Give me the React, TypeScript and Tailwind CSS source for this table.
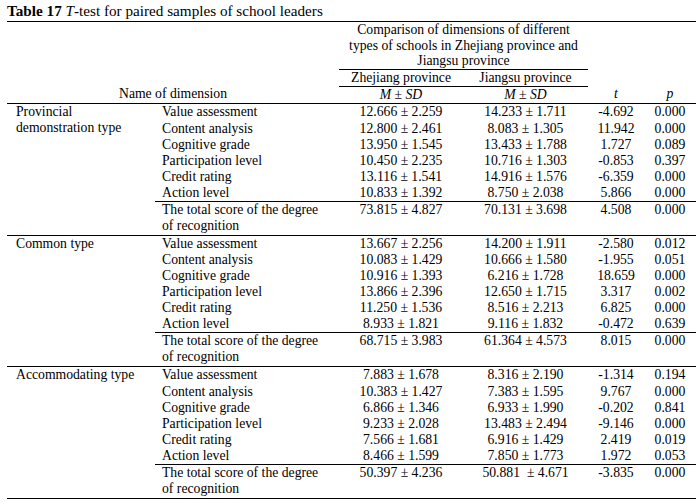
type Row = { dim: string; zj: string; js: string; t: string; p: string };
type Group = { name: React.ReactNode; rows: Row[]; total: Row };

const groups: Group[] = [
  {
    name: (
      <>
        Provincial
        <br />
        demonstration type
      </>
    ),
    rows: [
      { dim: "Value assessment", zj: "12.666 ± 2.259", js: "14.233 ± 1.711", t: "-4.692", p: "0.000" },
      { dim: "Content analysis", zj: "12.800 ± 2.461", js: "8.083 ± 1.305", t: "11.942", p: "0.000" },
      { dim: "Cognitive grade", zj: "13.950 ± 1.545", js: "13.433 ± 1.788", t: "1.727", p: "0.089" },
      { dim: "Participation level", zj: "10.450 ± 2.235", js: "10.716 ± 1.303", t: "-0.853", p: "0.397" },
      { dim: "Credit rating", zj: "13.116 ± 1.541", js: "14.916 ± 1.576", t: "-6.359", p: "0.000" },
      { dim: "Action level", zj: "10.833 ± 1.392", js: "8.750 ± 2.038", t: "5.866", p: "0.000" },
    ],
    total: { dim: "", zj: "73.815 ± 4.827", js: "70.131 ± 3.698", t: "4.508", p: "0.000" },
  },
  {
    name: "Common type",
    rows: [
      { dim: "Value assessment", zj: "13.667 ± 2.256", js: "14.200 ± 1.911", t: "-2.580", p: "0.012" },
      { dim: "Content analysis", zj: "10.083 ± 1.429", js: "10.666 ± 1.580", t: "-1.955", p: "0.051" },
      { dim: "Cognitive grade", zj: "10.916 ± 1.393", js: "6.216 ± 1.728", t: "18.659", p: "0.000" },
      { dim: "Participation level", zj: "13.866 ± 2.396", js: "12.650 ± 1.715", t: "3.317", p: "0.002" },
      { dim: "Credit rating", zj: "11.250 ± 1.536", js: "8.516 ± 2.213", t: "6.825", p: "0.000" },
      { dim: "Action level", zj: "8.933 ± 1.821", js: "9.116 ± 1.832", t: "-0.472", p: "0.639" },
    ],
    total: { dim: "", zj: "68.715 ± 3.983", js: "61.364 ± 4.573", t: "8.015", p: "0.000" },
  },
  {
    name: "Accommodating type",
    rows: [
      { dim: "Value assessment", zj: "7.883 ± 1.678", js: "8.316 ± 2.190", t: "-1.314", p: "0.194" },
      { dim: "Content analysis", zj: "10.383 ± 1.427", js: "7.383 ± 1.595", t: "9.767", p: "0.000" },
      { dim: "Cognitive grade", zj: "6.866 ± 1.346", js: "6.933 ± 1.990", t: "-0.202", p: "0.841" },
      { dim: "Participation level", zj: "9.233 ± 2.028", js: "13.483 ± 2.494", t: "-9.146", p: "0.000" },
      { dim: "Credit rating", zj: "7.566 ± 1.681", js: "6.916 ± 1.429", t: "2.419", p: "0.019" },
      { dim: "Action level", zj: "8.466 ± 1.599", js: "7.850 ± 1.773", t: "1.972", p: "0.053" },
    ],
    total: { dim: "", zj: "50.397 ± 4.236", js: "50.881\u00a0 ± 4.671", t: "-3.835", p: "0.000" },
  },
];

function MSD() {
  return (
    <>
      <i>M</i> ± <i>SD</i>
    </>
  );
}

export default function App() {
  return (
    <div className="w-[696px] h-[504px] bg-white text-black [font-family:Liberation_Serif,serif] overflow-hidden">
      {/* Caption */}
      <div className="pl-[7px] h-[21px] text-[15.2px] leading-[21px]">
        <b>Table 17</b> <i>T</i>-test for paired samples of school leaders
      </div>

      <table className="ml-[7px] w-[689px] table-fixed border-collapse text-[13.7px] leading-[16px]">
        <colgroup>
          <col className="w-[148px]" />
          <col className="w-[184px]" />
          <col className="w-[124px]" />
          <col className="w-[125px]" />
          <col className="w-[56px]" />
          <col className="w-[52px]" />
        </colgroup>
        <thead>
          <tr className="border-t border-black">
            <th colSpan={2} rowSpan={3} className="font-normal align-bottom text-center p-0 pb-[1px]">
              Name of dimension
            </th>
            <th colSpan={2} className="font-normal text-center p-0 h-[47px] leading-[15.7px] border-b border-black">
              Comparison of dimensions of different
              <br />
              types of schools in Zhejiang province and
              <br />
              Jiangsu province
            </th>
            <th rowSpan={3} className="font-normal italic align-bottom text-center p-0 pb-[1px]">
              t
            </th>
            <th rowSpan={3} className="font-normal italic align-bottom text-center p-0 pb-[1px]">
              p
            </th>
          </tr>
          <tr>
            <th className="font-normal text-center p-0 h-[17px] border-b border-black">Zhejiang province</th>
            <th className="font-normal text-center p-0 h-[17px] border-b border-black">Jiangsu province</th>
          </tr>
          <tr className="border-b border-black">
            <th className="font-normal text-center p-0 h-[16px]">
              <MSD />
            </th>
            <th className="font-normal text-center p-0 h-[16px]">
              <MSD />
            </th>
          </tr>
        </thead>
        <tbody>
          {groups.map((g, gi) => (
            <GroupRows key={gi} group={g} />
          ))}
        </tbody>
      </table>
    </div>
  );
}

function GroupRows({ group }: { group: Group }) {
  const numCls = "p-0 text-center align-top";
  return (
    <>
      {group.rows.map((r, i) => {
        const last = i === group.rows.length - 1;
        const b = last ? " border-b border-black" : "";
        return (
          <tr key={i} className={i === 0 ? "border-t border-black h-[17px]" : "h-[16px]"}>
            {i === 0 && (
              <td rowSpan={group.rows.length + 1} className="p-0 pl-[9px] align-top">
                {group.name}
              </td>
            )}
            <td className={"p-0 pl-[7px] align-top" + b}>{r.dim}</td>
            <td className={numCls + b}>{r.zj}</td>
            <td className={numCls + b}>{r.js}</td>
            <td className={numCls + b}>{r.t}</td>
            <td className={numCls + b}>{r.p}</td>
          </tr>
        );
      })}
      <tr className="border-b border-black h-[34px]">
        <td className="p-0 pl-[7px] align-top">
          The total score of the degree
          <br />
          of recognition
        </td>
        <td className={numCls}>{group.total.zj}</td>
        <td className={numCls}>{group.total.js}</td>
        <td className={numCls}>{group.total.t}</td>
        <td className={numCls}>{group.total.p}</td>
      </tr>
    </>
  );
}
